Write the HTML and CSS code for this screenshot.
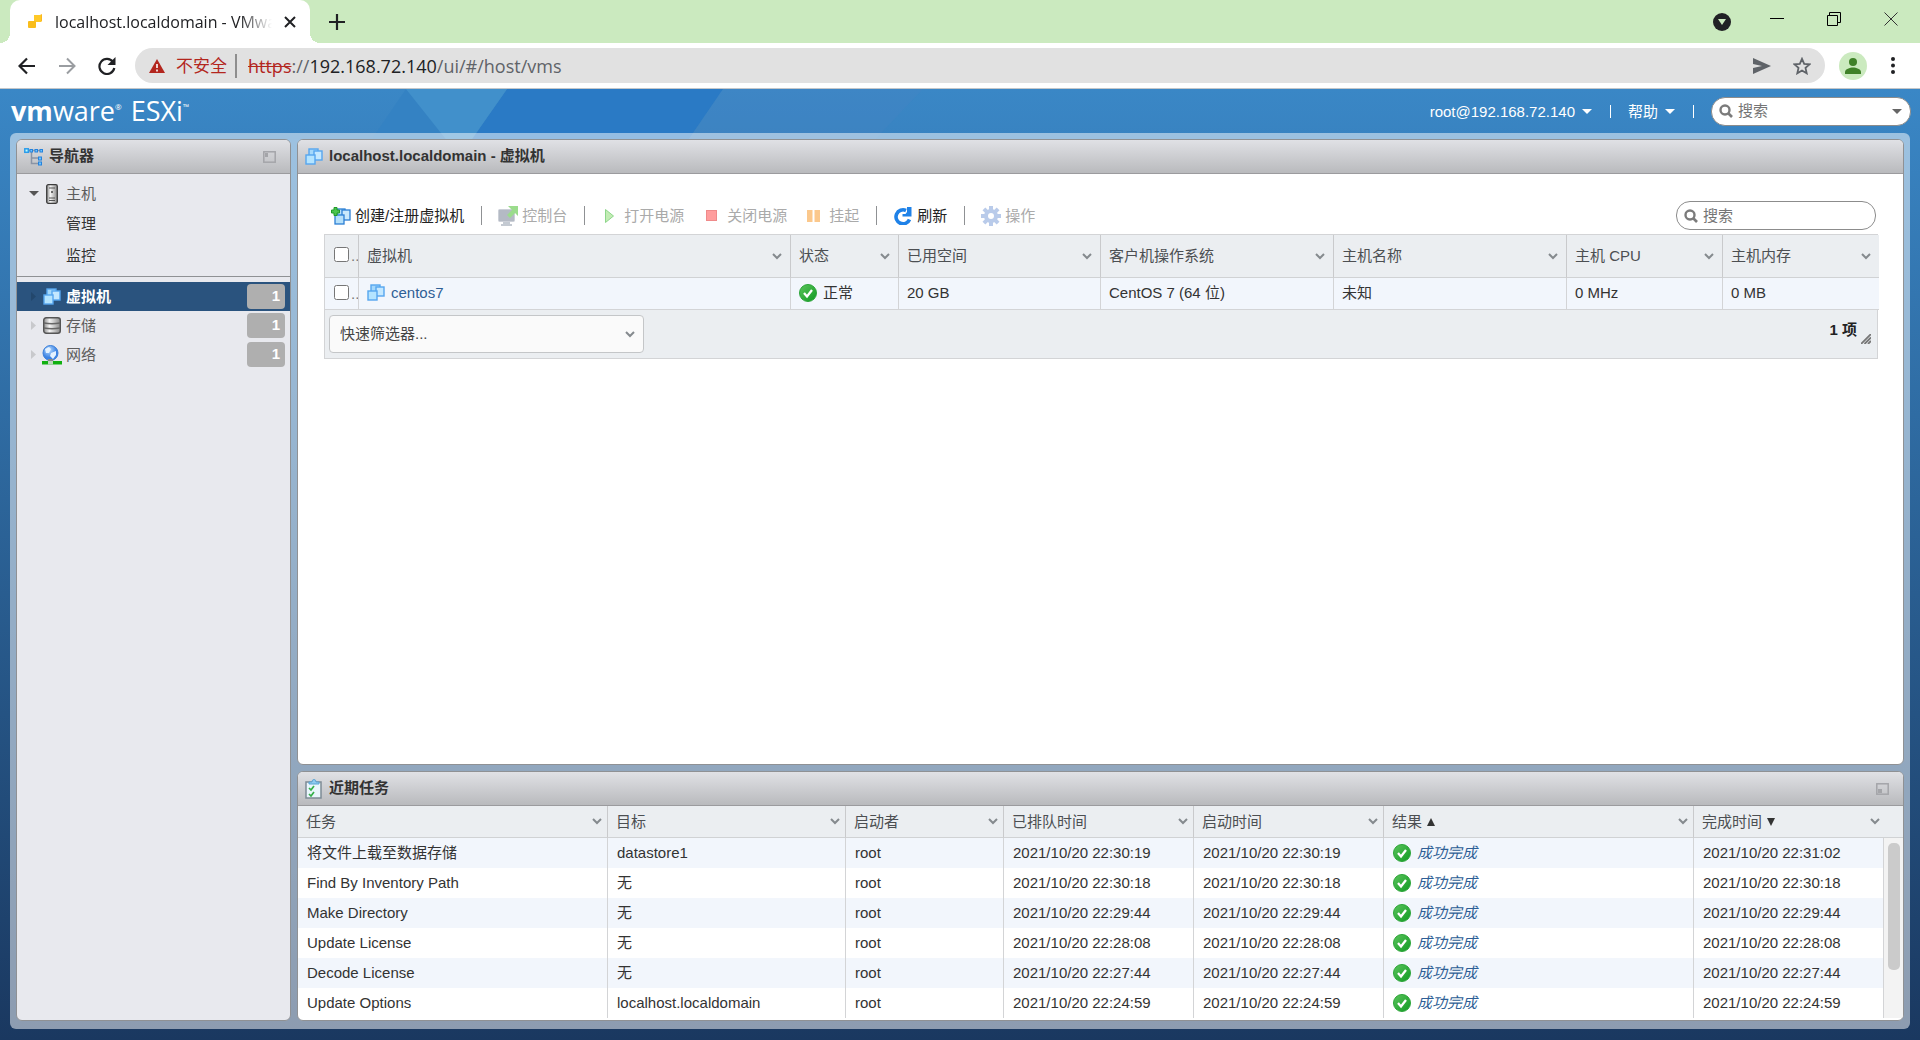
FILE: index.html
```html
<!DOCTYPE html>
<html lang="zh-CN">
<head>
<meta charset="utf-8">
<title>localhost.localdomain - VMware ESXi</title>
<link rel="stylesheet" href="styles.css">
</head>
<body>
<svg class="defs" aria-hidden="true">
  <defs>
    <linearGradient id="g-ok" x1="0" y1="0" x2="1" y2="1"><stop offset="0" stop-color="#5cc45c"/><stop offset="1" stop-color="#0f9a22"/></linearGradient>
    <linearGradient id="g-metal" x1="0" x2="1"><stop offset="0" stop-color="#8a8a8a"/><stop offset=".35" stop-color="#f4f4f4"/><stop offset="1" stop-color="#8a8a8a"/></linearGradient>
    <radialGradient id="g-globe" cx=".4" cy=".3"><stop offset="0" stop-color="#b9dcff"/><stop offset="1" stop-color="#3c83e4"/></radialGradient>
    <symbol id="vm" viewBox="0 0 18 17">
      <g fill="#a4d8fb" stroke="#56a6ef" stroke-width="1.400"><rect x="4" y="1" width="9" height="8"/><rect x="9" y="3" width="8" height="9" fill="#c4e8ff"/><rect x="1" y="7" width="9" height="9" fill="#b4e4ff"/></g>
    </symbol>
    <symbol id="vmnew" viewBox="0 0 20 18">
      <g fill="#b5e0fa" stroke="#2b7fd4" stroke-width="1.300"><rect x="6" y="2" width="8" height="8"/><rect x="11" y="3" width="8" height="10" fill="#c9e9fc"/><rect x="4" y="8" width="9" height="9"/></g>
      <path d="M3 .5h3v2.500h2.500v3H6v2.500H3V6H.5V3H3z" fill="#4cc44c" stroke="#209a28"/>
    </symbol>
    <symbol id="ok" viewBox="0 0 18 18"><circle cx="9" cy="9" r="8.500" fill="url(#g-ok)" stroke="#2da53a"/><path d="M5 9l3 3.500 5-6.500" fill="none" stroke="#fff" stroke-width="2.300"/></symbol>
    <symbol id="chev" viewBox="0 0 10 7"><path d="M1 1l4 4 4-4" fill="none" stroke="#858a8e" stroke-width="2"/></symbol>
    <symbol id="mag" viewBox="0 0 14 14"><circle cx="6" cy="6" r="4.500" fill="none" stroke="#7b7b7b" stroke-width="2.400"/><path d="M9 9l4 4" stroke="#7b7b7b" stroke-width="2.600"/></symbol>
    <symbol id="down" viewBox="0 0 10 5"><path d="M0 0h10L5 5z" fill="currentColor"/></symbol>
    <symbol id="right" viewBox="0 0 5 9"><path d="M0 0l5 4.500L0 9z" fill="currentColor"/></symbol>
  </defs>
</svg>

<div class="tabstrip">
  <div class="tab">
    <svg class="favicon" viewBox="0 0 15 15" width="15" height="15"><path d="M6 1h6l2-1v7l-1 1H7z" fill="#fbb81f"/><rect x="6" y="1" width="7" height="7" fill="#ffc928"/><rect x="0" y="7" width="8" height="7" rx="1" fill="#f9bd1c"/></svg>
    <span class="tab-title">localhost.localdomain - VMwa</span>
    <button class="plain" aria-label="关闭标签页"><svg width="12" height="12" viewBox="0 0 12 12"><path d="M1 1l10 10M11 1L1 11" stroke="#202124" stroke-width="2"/></svg></button>
  </div>
  <button class="plain newtab" aria-label="新标签页"><svg width="16" height="16" viewBox="0 0 16 16"><path d="M8 0v16M0 8h16" stroke="#202124" stroke-width="2.200"/></svg></button>
  <div class="window-buttons">
    <button class="plain tab-search" aria-label="搜索标签页"><svg width="18" height="18" viewBox="0 0 18 18"><circle cx="9" cy="9" r="9" fill="#202124"/><path d="M5 6h8l-4 6z" fill="#cbeabf"/></svg></button>
    <button class="plain" aria-label="最小化"><svg width="14" height="14" viewBox="0 0 14 14"><path d="M0 6.500h14" stroke="#000"/></svg></button>
    <button class="plain" aria-label="还原"><svg width="14" height="14" viewBox="0 0 14 14"><path d="M.5 3.500h10v10H.5zM2.500 3.500v-3h11v10h-3" fill="none" stroke="#000"/></svg></button>
    <button class="plain" aria-label="关闭"><svg width="14" height="14" viewBox="0 0 14 14"><path d="M.5.5l13 13M13.500.5l-13 13" stroke="#333"/></svg></button>
  </div>
</div>

<div class="toolbar">
  <div class="nav-buttons">
    <button class="plain" aria-label="后退"><svg width="18" height="18" viewBox="0 0 18 18"><path d="M17 9H2M9 1.500L1.500 9 9 16.500" fill="none" stroke="#202124" stroke-width="2.200"/></svg></button>
    <button class="plain" aria-label="前进"><svg width="18" height="18" viewBox="0 0 18 18"><path d="M1 9h15M9 1.500L16.500 9 9 16.500" fill="none" stroke="#9a9da1" stroke-width="2"/></svg></button>
    <button class="plain" aria-label="重新加载"><svg width="18" height="18" viewBox="0 0 18 18"><path d="M15 5a7.500 7.500 0 1 0 1.300 6" fill="none" stroke="#202124" stroke-width="2.200"/><path d="M17.500 0v8h-8z" fill="#202124"/></svg></button>
  </div>
  <div class="omnibox">
    <svg width="16" height="14" viewBox="0 0 16 14"><path d="M8 0l8 14H0z" fill="#b3261e"/><path d="M8 5v4M8 10.500v2" stroke="#fff" stroke-width="1.600"/></svg>
    <span class="insecure">不安全</span>
    <span class="url"><s>https</s>://<b>192.168.72.140</b>/ui/#/host/vms</span>
    <button class="plain" aria-label="发送"><svg width="18" height="16" viewBox="0 0 18 16"><path d="M0 0l18 8L0 16V10l9-2-9-2z" fill="#5f6368"/></svg></button>
    <button class="plain" aria-label="收藏"><svg width="18" height="18" viewBox="0 0 18 18"><path d="M9 1.800l2.200 5 5.300.5-4 3.600 1.200 5.400L9 13.500l-4.700 2.800 1.200-5.400-4-3.600 5.300-.5z" fill="none" stroke="#5f6368" stroke-width="1.800"/></svg></button>
  </div>
  <button class="plain" aria-label="个人资料"><svg width="28" height="28" viewBox="0 0 28 28"><circle cx="14" cy="14" r="14" fill="#cbeabf"/><circle cx="14" cy="10" r="4" fill="#3f8128"/><path d="M6 22v-2c0-3 5-4.500 8-4.500s8 1.500 8 4.500v2z" fill="#3f8128"/></svg></button>
  <button class="plain menu" aria-label="菜单"><svg width="4" height="17" viewBox="0 0 4 17"><g fill="#202124"><circle cx="2" cy="2" r="2"/><circle cx="2" cy="8.500" r="2"/><circle cx="2" cy="15" r="2"/></g></svg></button>
</div>

<div class="app">
  <svg class="decor" viewBox="0 0 1920 63" preserveAspectRatio="xMinYMin slice" aria-hidden="true">
    <path d="M406 0l57 63H363z" fill="#3482c3"/>
    <path d="M507 0h216l-43 63H463z" fill="#2a7ac5"/>
    <path d="M406 0h101l-44 63h-7z" fill="#4190cb"/>
    <path d="M723 0h200l-60 63H680z" fill="#4a86c2" opacity=".3"/>
  </svg>
  <header class="appbar">
    <h1 class="logo"><strong>vm</strong>ware<sup>®</sup> <span class="esxi">ESXi<sup>™</sup></span></h1>
    <button class="plain appmenu">root@192.168.72.140 <svg width="10" height="5"><use href="#down"/></svg></button>
    <button class="plain appmenu help">帮助 <svg width="10" height="5"><use href="#down"/></svg></button>
    <div class="search search-app"><svg width="14" height="14"><use href="#mag"/></svg><input type="text" placeholder="搜索" aria-label="搜索"><svg class="grey" width="10" height="5"><use href="#down"/></svg></div>
  </header>

  <div class="workspace">
    <nav class="panel navigator">
      <div class="panel-head"><svg width="20" height="18" viewBox="0 0 20 18"><path d="M5 2.500h14M7.500 4v11.500H16M7.500 10H16" fill="none" stroke="#8a94a5" stroke-width="1.500"/><rect x=".8" y=".8" width="3.500" height="3.500" fill="#bff" stroke="#2b9bea" stroke-width="1.500"/><g fill="#6ec4ff" stroke="#2582dc"><rect x="6" y="1.500" width="2.500" height="2.500"/><rect x="11" y="1.500" width="2.500" height="2.500"/><rect x="16" y="1.500" width="2.500" height="2.500"/><rect x="14.500" y="9" width="3" height="3"/><rect x="14.500" y="14" width="3" height="3"/></g></svg>
        <h2>导航器</h2>
        <button class="plain" aria-label="折叠导航器"><svg width="13" height="12" viewBox="0 0 13 12"><rect x=".8" y=".8" width="11.400" height="10.400" fill="none" stroke="#a4a5a9" stroke-width="1.500"/><rect x="2" y="2" width="3" height="4" fill="#a4a5a9"/></svg></button>
      </div>
      <div class="tree">
        <a href="#host" class="node host"><svg class="open" width="10" height="5"><use href="#down"/></svg><svg class="ico" width="20" height="20" viewBox="0 0 20 20"><rect x="4.700" y=".7" width="10.600" height="18.600" rx="1.500" fill="url(#g-metal)" stroke="#3c3c3c" stroke-width="1.300"/><path d="M7 4h6M7 14h6M7 16.500h6" stroke="#555"/><circle cx="10" cy="8" r="1" fill="#444"/></svg>主机</a>
        <a href="#manage" class="node leaf">管理</a>
        <a href="#monitor" class="node leaf leaf-end">监控</a>
        <a href="#vms" class="node selected"><svg class="twist" width="5" height="9"><use href="#right"/></svg><svg class="ico" width="18" height="17"><use href="#vm"/></svg>虚拟机<span class="badge">1</span></a>
        <a href="#storage" class="node"><svg class="twist" width="5" height="9"><use href="#right"/></svg><svg class="ico" width="18" height="17" viewBox="0 0 18 17"><rect x=".7" y=".7" width="16.600" height="15.600" rx="2.500" fill="url(#g-metal)" stroke="#555" stroke-width="1.400"/><path d="M1 6q8 1.500 16 0M1 11q8 1.500 16 0" fill="none" stroke="#666" stroke-width="1.300"/></svg>存储<span class="badge">1</span></a>
        <a href="#net" class="node"><svg class="twist" width="5" height="9"><use href="#right"/></svg><svg class="ico" width="20" height="20" viewBox="0 0 20 20"><circle cx="8.500" cy="8" r="7.500" fill="url(#g-globe)" stroke="#3c7fd8"/><path d="M3 4l4-2 2 2-2 4-3 0zM9 8l5-2v4l-3 4-3-3z" fill="#e4f2ff"/><path d="M6 14h5v3H6z" fill="#888"/><path d="M0 16h20v3.500H0z" fill="#10b010"/><path d="M6 16h5v3.500H6z" fill="#bcd8bc"/></svg>网络<span class="badge">1</span></a>
      </div>
    </nav>

    <div class="content">
      <main class="panel">
        <div class="panel-head"><svg width="18" height="17"><use href="#vm"/></svg><h2>localhost.localdomain - 虚拟机</h2></div>
        <div class="vms">
          <div class="actions">
            <button class="plain act"><svg width="20" height="18"><use href="#vmnew"/></svg>创建/注册虚拟机</button>
            <button class="plain act sep" disabled><svg width="20" height="20" viewBox="0 0 20 20"><rect x=".5" y="3.500" width="16" height="12" rx="1" fill="#b4bac4" stroke="#ccd0d8"/><path d="M5 16h7v2h2v2H3v-2h2z" fill="#c4cad2"/><path d="M10 0h10v10l-3-3-5 5-3-3 5-5z" fill="#9bdc8c"/></svg>控制台</button>
            <button class="plain act sep power" disabled><svg width="9" height="14" viewBox="0 0 9 14"><path d="M.5.5v13L8.500 7z" fill="#c2ecb4" stroke="#8dd68a"/></svg>打开电源</button>
            <button class="plain act stop" disabled><svg width="11" height="11" viewBox="0 0 11 11"><rect x=".5" y=".5" width="10" height="10" fill="#ff9d9d" stroke="#ef8a8a"/></svg>关闭电源</button>
            <button class="plain act" disabled><svg width="13" height="12" viewBox="0 0 13 12"><path d="M0 0h5.500v12H0zM7.500 0H13v12H7.500z" fill="#fbc88c"/></svg>挂起</button>
            <button class="plain act sep near"><svg width="18" height="18" viewBox="0 0 18 18"><path d="M15.500 12.500A7 7 0 1 1 12 3.500" fill="none" stroke="#1f82e8" stroke-width="3.600"/><path d="M17.500 0v9.500H8.500V7h3L13 5V0z" fill="#1f82e8"/></svg>刷新</button>
            <button class="plain act sep" disabled><svg width="20" height="20" viewBox="0 0 20 20"><g fill="#b9cbea"><rect x="8" y="0" width="4" height="20"/><rect x="0" y="8" width="20" height="4"/><rect x="8" y="0" width="4" height="20" transform="rotate(45 10 10)"/><rect x="8" y="0" width="4" height="20" transform="rotate(-45 10 10)"/><circle cx="10" cy="10" r="7"/></g><circle cx="10" cy="10" r="3" fill="#fff"/></svg>操作</button>
            <div class="search search-vm"><svg width="14" height="14"><use href="#mag"/></svg><input type="text" placeholder="搜索" aria-label="搜索虚拟机"></div>
          </div>
          <div class="gridbox">
            <table class="vm-table">
              <colgroup><col class="w34"><col class="w432"><col class="w108"><col class="w202"><col class="w233"><col class="w233"><col class="w156"><col class="w156"></colgroup>
              <thead><tr>
                <th class="check"><input type="checkbox" aria-label="全选">..</th>
                <th><div>虚拟机<svg class="chev"><use href="#chev"/></svg></div></th>
                <th><div>状态<svg class="chev"><use href="#chev"/></svg></div></th>
                <th><div>已用空间<svg class="chev"><use href="#chev"/></svg></div></th>
                <th><div>客户机操作系统<svg class="chev"><use href="#chev"/></svg></div></th>
                <th><div>主机名称<svg class="chev"><use href="#chev"/></svg></div></th>
                <th><div>主机 CPU<svg class="chev"><use href="#chev"/></svg></div></th>
                <th><div>主机内存<svg class="chev"><use href="#chev"/></svg></div></th>
              </tr></thead>
              <tbody><tr>
                <td class="check"><input type="checkbox" aria-label="选择 centos7">..</td>
                <td><a href="#centos7" class="with-ico"><svg width="18" height="17"><use href="#vm"/></svg>centos7</a></td>
                <td><span class="with-ico"><svg width="18" height="18"><use href="#ok"/></svg>正常</span></td>
                <td>20 GB</td><td>CentOS 7 (64 位)</td><td>未知</td><td>0 MHz</td><td>0 MB</td>
              </tr></tbody>
            </table>
            <div class="grid-foot">
              <div class="filter"><select aria-label="快速筛选器"><option>快速筛选器...</option></select><svg class="chev"><use href="#chev"/></svg></div>
              <span class="count">1 项</span>
              <svg class="grip" width="10" height="10" viewBox="0 0 10 10"><path d="M0 10L10 0M3.500 10L10 3.500M7 10l3-3" stroke="#777" stroke-width="1.800"/></svg>
            </div>
          </div>
        </div>
      </main>

      <section class="panel tasks">
        <div class="panel-head"><svg width="18" height="20" viewBox="0 0 18 20"><rect x="1" y="3" width="15" height="16" fill="#e9f6fc" stroke="#7d8b95" stroke-width="1.500"/><path d="M4 5V3h3q0-2.500 2-2.500T11 3h3v2z" fill="#8ecbf0" stroke="#5ba3d2"/><path d="M4 9l2 2 3-4M4 15l2 2 3-4" fill="none" stroke="#35b04a" stroke-width="1.700"/></svg>
          <h2>近期任务</h2>
          <button class="plain" aria-label="折叠近期任务"><svg width="13" height="12" viewBox="0 0 13 12"><rect x=".8" y=".8" width="11.400" height="10.400" fill="none" stroke="#a4a5a9" stroke-width="1.500"/><rect x="2" y="6" width="4" height="4" fill="#a4a5a9"/></svg></button>
        </div>
        <table class="task-table">
          <colgroup><col class="w310"><col class="w238"><col class="w158"><col class="w190"><col class="w190"><col class="w310"><col class="w190"><col class="w20"></colgroup>
          <thead><tr>
            <th><div>任务<svg class="chev"><use href="#chev"/></svg></div></th>
            <th><div>目标<svg class="chev"><use href="#chev"/></svg></div></th>
            <th><div>启动者<svg class="chev"><use href="#chev"/></svg></div></th>
            <th><div>已排队时间<svg class="chev"><use href="#chev"/></svg></div></th>
            <th><div>启动时间<svg class="chev"><use href="#chev"/></svg></div></th>
            <th><div>结果<svg class="sort" width="8" height="8"><path d="M0 8h8L4 0z"/></svg><svg class="chev"><use href="#chev"/></svg></div></th>
            <th colspan="2" class="finished"><div>完成时间<svg class="sort" width="8" height="8"><path d="M0 0h8L4 8z"/></svg><svg class="chev"><use href="#chev"/></svg></div></th>
          </tr></thead>
          <tbody>
            <tr><td>将文件上载至数据存储</td><td>datastore1</td><td>root</td><td>2021/10/20 22:30:19</td><td>2021/10/20 22:30:19</td><td><a href="#t1" class="with-ico"><svg width="18" height="18"><use href="#ok"/></svg>成功完成</a></td><td>2021/10/20 22:31:02</td><td rowspan="6" class="scroll"><div class="thumb"></div></td></tr>
            <tr><td>Find By Inventory Path</td><td>无</td><td>root</td><td>2021/10/20 22:30:18</td><td>2021/10/20 22:30:18</td><td><a href="#t2" class="with-ico"><svg width="18" height="18"><use href="#ok"/></svg>成功完成</a></td><td>2021/10/20 22:30:18</td></tr>
            <tr><td>Make Directory</td><td>无</td><td>root</td><td>2021/10/20 22:29:44</td><td>2021/10/20 22:29:44</td><td><a href="#t3" class="with-ico"><svg width="18" height="18"><use href="#ok"/></svg>成功完成</a></td><td>2021/10/20 22:29:44</td></tr>
            <tr><td>Update License</td><td>无</td><td>root</td><td>2021/10/20 22:28:08</td><td>2021/10/20 22:28:08</td><td><a href="#t4" class="with-ico"><svg width="18" height="18"><use href="#ok"/></svg>成功完成</a></td><td>2021/10/20 22:28:08</td></tr>
            <tr><td>Decode License</td><td>无</td><td>root</td><td>2021/10/20 22:27:44</td><td>2021/10/20 22:27:44</td><td><a href="#t5" class="with-ico"><svg width="18" height="18"><use href="#ok"/></svg>成功完成</a></td><td>2021/10/20 22:27:44</td></tr>
            <tr><td>Update Options</td><td>localhost.localdomain</td><td>root</td><td>2021/10/20 22:24:59</td><td>2021/10/20 22:24:59</td><td><a href="#t6" class="with-ico"><svg width="18" height="18"><use href="#ok"/></svg>成功完成</a></td><td>2021/10/20 22:24:59</td></tr>
          </tbody>
        </table>
      </section>
    </div>
  </div>
</div>
</body>
</html>
```
FILE: styles.css
```css
* { box-sizing: border-box; }
body {
  margin: 0;
  min-height: 100vh;
  display: flex;
  flex-direction: column;
  font: 15px/20px "Liberation Sans", "Noto Sans CJK SC", sans-serif;
  color: #333;
}
svg { display: block; flex: none; }
a { color: inherit; text-decoration: none; }
h1, h2 { margin: 0; font-size: 15px; }
.defs { position: absolute; width: 0; height: 0; }
.plain {
  display: flex;
  align-items: center;
  padding: 0;
  border: 0;
  background: none;
  font: inherit;
  color: inherit;
}

/* Browser frame */
.tabstrip {
  display: flex;
  height: 43px;
  padding: 0 22px 0 10px;
  background: #cbeabf;
  font: 16px/24px "Open Sans", "Noto Sans CJK SC", sans-serif;
}
.tab {
  display: flex;
  align-items: center;
  gap: 12px;
  width: 300px;
  padding: 0 14px 0 18px;
  border-radius: 10px 10px 0 0;
  background: #fff;
  position: relative;
}
.tab::before, .tab::after {
  content: "";
  position: absolute;
  bottom: 0;
  width: 10px;
  height: 10px;
}
.tab::before { left: -10px; background: radial-gradient(circle at 0 0, transparent 10px, #fff 10px); }
.tab::after { right: -10px; background: radial-gradient(circle at 100% 0, transparent 10px, #fff 10px); }
.tab-title {
  flex: 1;
  min-width: 0;
  white-space: nowrap;
  color: #202124;
  mask-image: linear-gradient(to right, #000 85%, transparent);
}
.newtab { margin-left: 19px; }
.window-buttons { display: flex; gap: 43px; margin-left: auto; align-items: center; height: 37px; }
.tab-search { margin: 6px -4px 0 0; }
.toolbar {
  display: flex;
  align-items: center;
  height: 46px;
  padding: 0 25px 0 18px;
  border-bottom: 1px solid #c3c6c9;
  background: #fff;
}
.nav-buttons { display: flex; gap: 22px; margin-right: 19px; }
.omnibox {
  flex: 1;
  display: flex;
  align-items: center;
  height: 35px;
  margin-right: 14px;
  padding: 0 14px;
  border-radius: 18px;
  background: #e1e1e1;
  font: 18px/24px "Open Sans", "Noto Sans CJK SC", sans-serif;
  color: #5f6368;
}
.insecure {
  margin: 0 11px;
  padding-right: 8px;
  border-right: 2px solid #8e8e8e;
  color: #b3261e;
  font-size: 17px;
}
.url { flex: 1; }
.url s { color: #b3261e; }
.url b { font-weight: 400; color: #202124; }
.omnibox .plain + .plain { margin-left: 22px; }
.menu { margin-left: 24px; }

/* Application */
.app {
  flex: 1;
  display: flex;
  flex-direction: column;
  position: relative;
  background: linear-gradient(#3a87c6, #1a3860);
}
.decor { position: absolute; top: 0; left: 0; width: 100%; height: 63px; }
.appbar {
  position: relative;
  display: flex;
  align-items: center;
  height: 44px;
  padding: 0 9px 0 11px;
  color: #fff;
}
.logo {
  flex: 1;
  font: 400 27px/32px "Open Sans", sans-serif;
}
.logo strong { font-weight: 700; }
.logo sup { font-size: 8px; line-height: 8px; vertical-align: 11px; }
.esxi { margin-left: 2px; }
.appmenu { gap: 7px; padding-right: 18px; border-right: 1px solid #fff; line-height: 13px; }
.help { margin-left: 17px; }
.search {
  display: flex;
  align-items: center;
  gap: 5px;
  width: 200px;
  height: 29px;
  padding: 0 8px 0 7px;
  border: 1px solid #8c8c8c;
  border-radius: 14px;
  background: #fff;
}
.search input {
  flex: 1;
  min-width: 0;
  padding: 0;
  border: 0;
  outline: 0;
  background: none;
  font: inherit;
}
.search input::placeholder { color: #757575; }
.search-app { margin-left: 17px; }
.search-vm { margin-left: auto; }
.grey { color: #666; }
.workspace {
  flex: 1;
  position: relative;
  display: flex;
  gap: 6px;
  margin: 0 10px 11px;
  padding: 6px 6px 8px;
  border-radius: 6px;
  background: rgba(255, 255, 255, .5);
}
.panel {
  border: 1px solid #8f9194;
  border-radius: 6px;
  overflow: hidden;
  background: #fff;
}
.panel-head {
  display: flex;
  align-items: center;
  gap: 5px;
  height: 34px;
  padding: 0 14px 0 7px;
  border-bottom: 1px solid #9b9b9e;
  background: linear-gradient(#e0e1e5, #b9babd);
}
.panel-head h2 { flex: 1; padding-bottom: 2px; }
.panel-head > svg { margin-right: 1px; }
.navigator { width: 275px; background: #e8e9ee; }
.navigator .panel-head { gap: 4px; }
.tree { padding-top: 5px; }
.node {
  display: flex;
  align-items: center;
  height: 29px;
  padding: 0 5px 0 14px;
  color: #5c5c5c;
}
.host { padding-left: 12px; }
.ico { width: 20px; margin: 0 4px 0 6px; }
.open { color: #555; margin-right: -3px; }
.twist { color: #c8c9cc; }
.leaf { height: 32px; padding-left: 49px; color: #333; }
.leaf-end { height: 37px; margin-bottom: 5px; padding-bottom: 5px; border-bottom: 1px solid #8f9194; }
.selected { background: #2a537e; color: #fff; font-weight: 700; }
.selected .twist { color: #23476c; }
.badge {
  margin-left: auto;
  width: 38px;
  height: 25px;
  padding-right: 5px;
  border-radius: 4px;
  background: #afafaf;
  color: #fff;
  font-weight: 700;
  line-height: 24px;
  text-align: right;
}
.content { flex: 1; min-width: 0; display: flex; flex-direction: column; gap: 6px; }
main.panel { flex: 1; }

/* Virtual machine grid */
.vms { padding: 27px 25px 27px 26px; }
.actions { display: flex; align-items: center; height: 29px; margin-bottom: 4px; padding: 0 2px 0 7px; }
.act { gap: 4px; color: #222; margin-right: 17px; white-space: nowrap; }
.act:disabled { color: #aaa; }
.sep::before { content: ""; width: 1px; height: 19px; margin-right: 12px; background: #8f9194; }
.power, .stop { gap: 10px; }
.power::before { margin-right: 10px; }
.stop { margin-left: 5px; }
.stop + .act { gap: 9px; margin-left: 3px; }
.near { gap: 5px; }
.gridbox { border: 1px solid #d3d4d6; background: #ebeef1; }
table { width: 100%; table-layout: fixed; border-collapse: separate; border-spacing: 0; }
th {
  padding: 0 8px;
  border-right: 1px solid #c9cacc;
  border-bottom: 1px solid #d0d2d4;
  background: #ebeef1;
  color: #4c4f52;
  font-weight: 400;
  text-align: left;
  white-space: nowrap;
}
th div { display: flex; align-items: center; }
td { padding: 0 8px 0 9px; border-right: 1px solid #d3d4d6; white-space: nowrap; }
.chev { width: 10px; height: 7px; margin-left: auto; }
.vm-table th { height: 43px; }
.vm-table td { height: 32px; padding: 0 8px 2px; background: #f2f6fc; border-bottom: 1px solid #d3d4d6; }
.vm-table th:last-child, .vm-table td:last-child { border-right: 0; }
.vm-table .check { padding: 0; overflow: hidden; color: #777; }
.check input { width: 15px; height: 15px; margin: 0 2px 0 9px; vertical-align: -1px; }
.with-ico { display: flex; align-items: center; gap: 6px; }
td a { color: #2f5f96; }
.grid-foot { display: flex; align-items: center; height: 48px; padding: 0 6px 0 4px; color: #222; }
.filter { display: grid; align-items: center; width: 315px; }
.filter > * { grid-area: 1 / 1; }
.filter select {
  height: 38px;
  padding: 0 10px;
  appearance: none;
  border: 1px solid #c4c6c8;
  border-radius: 4px;
  background: #fafafa;
  color: #454545;
  font: inherit;
}
.filter .chev { margin-right: 9px; }
.count { margin-left: auto; padding-bottom: 8px; font-weight: 700; }
.grip { margin: 10px 0 0 4px; }

/* Recent tasks */
.task-table th { height: 32px; padding-right: 5px; }
.task-table td { height: 30px; }
.task-table tbody tr:nth-child(odd) td { background: #f2f6fc; }
.task-table a { font-style: italic; }
.task-table th.finished { border-right: 0; padding-right: 24px; }
.sort { margin-left: 5px; fill: #333; }
.task-table tbody tr td.scroll { padding: 5px 4px; border-right: 0; background: #f3f3f3; vertical-align: top; }
.thumb { height: 127px; border-radius: 5px; background: #cbcbcb; }
.tasks { padding-bottom: 2px; }
.w20 { width: 20px; }
.w34 { width: 34px; }
.w108 { width: 108px; }
.w156 { width: 156px; }
.w158 { width: 158px; }
.w190 { width: 190px; }
.w202 { width: 202px; }
.w233 { width: 233px; }
.w238 { width: 238px; }
.w310 { width: 310px; }
.w432 { width: 432px; }
```
